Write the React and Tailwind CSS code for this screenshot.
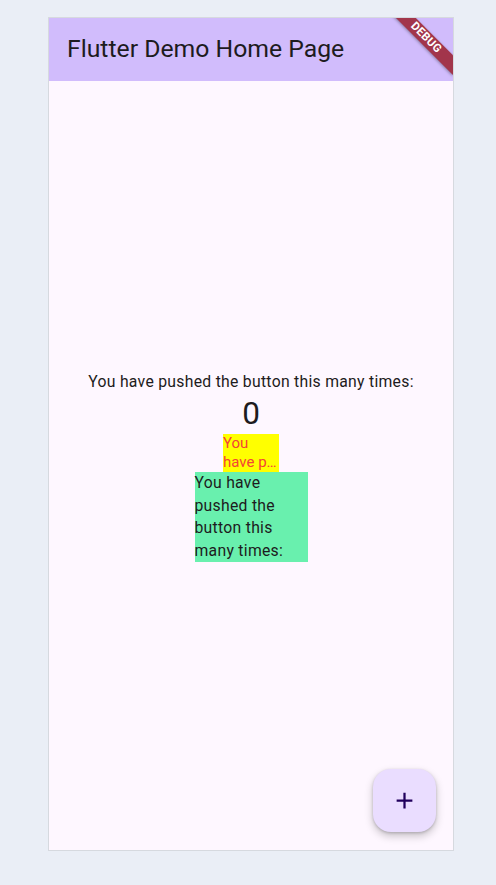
import React, { useState } from 'react';

const font = { fontFamily: 'Roboto, "Noto Sans", sans-serif' };

function DebugBanner() {
  // Flutter's corner ribbon, scaled to the screenshot
  return (
    <div className="pointer-events-none absolute right-[-18px] top-[13px] flex h-[13.5px] w-[90px] rotate-45 items-center justify-center bg-[#a2354b] shadow-[0_1px_3px_rgba(0,0,0,0.35)]">
      <span className="text-[11.5px] font-bold leading-none tracking-[0.3px] text-white">DEBUG</span>
    </div>
  );
}

export default function App() {
  const [count, setCount] = useState(0);

  return (
    <div className="min-h-[885px] w-full bg-[#eaeef6] pl-[48px] pt-[17px]" style={font}>
      <div className="relative flex h-[834px] w-[406px] flex-col overflow-hidden border border-[#d6d9df] bg-[#fef7ff]">
        {/* App bar */}
        <header className="flex h-[63px] shrink-0 items-center bg-[#d1bcfc] pl-[18px]">
          <h1 className="text-[24.75px] font-normal leading-none text-[#1d1b20]">Flutter Demo Home Page</h1>
        </header>
        <DebugBanner />

        {/* Body */}
        <main className="flex flex-1 flex-col items-center justify-center pt-[2px] text-[#1d1b20]">
          <p className="text-[15.75px] leading-[22.5px] tracking-[0.28px]">You have pushed the button this many times:</p>
          <p className="text-[31.5px] leading-[40.5px]">{count}</p>
          <div className="h-[38px] w-[56px] bg-[#ffff00] text-[15px] leading-[19px] text-[#f44336]">
            <p className="whitespace-nowrap">You</p>
            <p className="whitespace-nowrap">have p…</p>
          </div>
          <div className="w-[113px] bg-[#69f0ae]">
            <p className="text-[15.75px] leading-[22.5px] tracking-[0.28px]">You have pushed the button this many times:</p>
          </div>
        </main>

        {/* FAB */}
        <button
          onClick={() => setCount((c) => c + 1)}
          className="absolute bottom-[18px] right-[17px] flex h-[63px] w-[63px] items-center justify-center rounded-[18px] bg-[#eaddff] shadow-[0_4px_8px_rgba(0,0,0,0.22),0_1px_3px_rgba(0,0,0,0.18)]"
        >
          <svg width="27" height="27" viewBox="0 0 24 24" fill="#21005d">
            <path d="M19 13h-6v6h-2v-6H5v-2h6V5h2v6h6v2z" />
          </svg>
        </button>
      </div>
    </div>
  );
}
